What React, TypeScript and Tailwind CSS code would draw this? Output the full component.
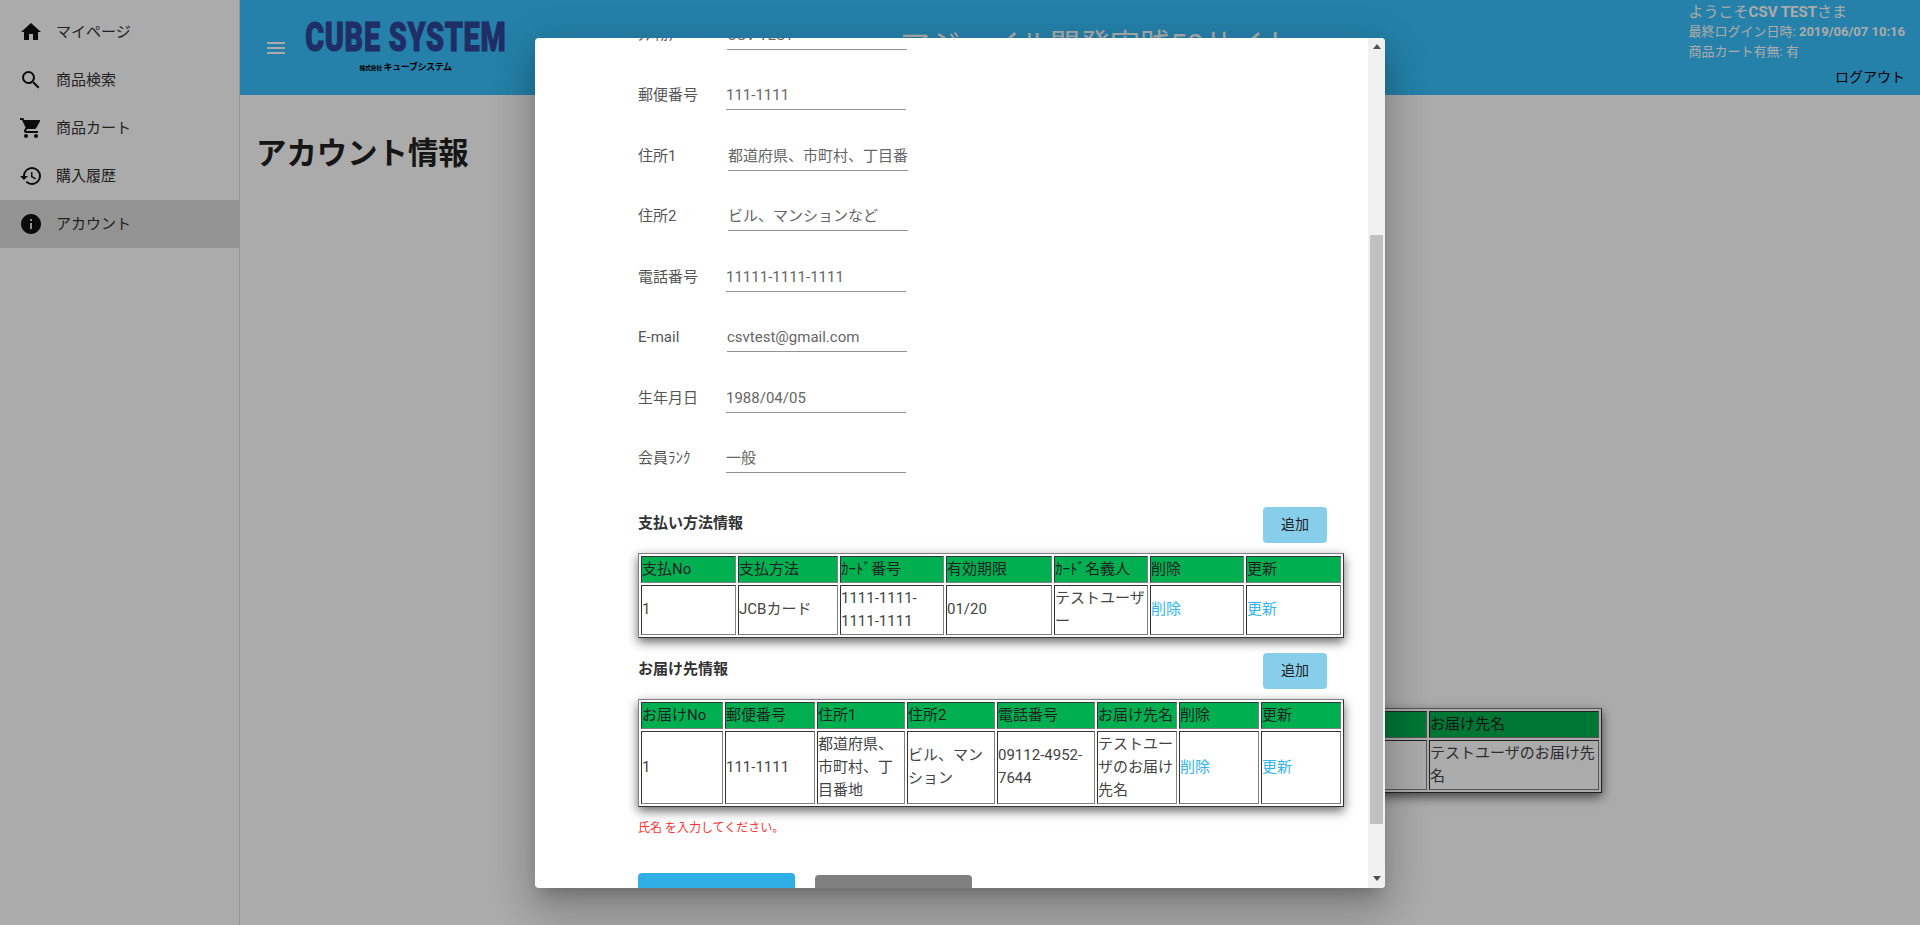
import { MdHistory, MdHome, MdInfo, MdMenu, MdSearch, MdShoppingCart } from "react-icons/md";

const FONT = "font-['Roboto','Noto_Sans_CJK_JP',sans-serif]";

const NAV_ITEMS = [
  { label: "マイページ", icon: MdHome },
  { label: "商品検索", icon: MdSearch },
  { label: "商品カート", icon: MdShoppingCart },
  { label: "購入履歴", icon: MdHistory },
  { label: "アカウント", icon: MdInfo, active: true },
];

const FIELDS = [
  { label: "ｼﾒｲｶﾅ", value: "CSV TEST", indent: "ml-[1px]" },
  { label: "郵便番号", value: "111-1111", indent: "" },
  { label: "住所1", value: "都道府県、市町村、丁目番地", indent: "ml-[2px]" },
  { label: "住所2", value: "ビル、マンションなど", indent: "ml-[2px]" },
  { label: "電話番号", value: "11111-1111-1111", indent: "" },
  { label: "E-mail", value: "csvtest@gmail.com", indent: "ml-[1px]" },
  { label: "生年月日", value: "1988/04/05", indent: "" },
  { label: "会員ﾗﾝｸ", value: "一般", indent: "" },
];

const PAYMENT_COLS = [
  { head: "支払No", cell: "1", width: "w-[95px]" },
  { head: "支払方法", cell: "JCBカード", width: "w-[100px]" },
  { head: "ｶｰﾄﾞ番号", cell: "1111-1111-1111-1111", width: "w-[104px]" },
  { head: "有効期限", cell: "01/20", width: "w-[106px]" },
  { head: "ｶｰﾄﾞ名義人", cell: "テストユーザー", width: "w-[94px]" },
  { head: "削除", cell: "削除", link: true, width: "w-[94px]" },
  { head: "更新", cell: "更新", link: true, width: "w-[95px]" },
];

const DELIVERY_COLS = [
  { head: "お届けNo", cell: "1", width: "w-[82px]" },
  { head: "郵便番号", cell: "111-1111", width: "w-[90px]" },
  { head: "住所1", cell: "都道府県、市町村、丁目番地", width: "w-[88px]" },
  { head: "住所2", cell: "ビル、マンション", width: "w-[88px]" },
  { head: "電話番号", cell: "09112-4952-7644", width: "w-[98px]" },
  { head: "お届け先名", cell: "テストユーザのお届け先名", width: "w-[80px]" },
  { head: "削除", cell: "削除", link: true, width: "w-[80px]" },
  { head: "更新", cell: "更新", link: true, width: "w-[80px]" },
];

const BEHIND_COLS = [
  { head: "電話番号", cell: "09112-4952-7644", width: "w-[162px]" },
  { head: "お届け先名", cell: "テストユーザのお届け先名", width: "w-[170px]" },
];

type Col = { head: string; cell: string; width: string; link?: boolean };

function DataTable({ cols, className }: { cols: Col[]; className: string }) {
  const cellBorder =
    "border border-t-[#333] border-l-[#333] border-r-[#808080] border-b-[#808080] py-px pl-0 pr-px text-left font-normal text-[15px] leading-[23px]";
  return (
    <table
      className={`table-fixed border-separate border-spacing-[2px] border border-t-[#808080] border-l-[#808080] border-r-[#333] border-b-[#333] shadow-[0_4px_10px_rgba(0,0,0,0.6)] ${className}`}
    >
      <thead>
        <tr>
          {cols.map((col) => (
            <th key={col.head} className={`${cellBorder} ${col.width} h-[26px] bg-[#00b050] text-[#222]`}>
              {col.head}
            </th>
          ))}
        </tr>
      </thead>
      <tbody>
        <tr>
          {cols.map((col) => (
            <td key={col.head} className={`${cellBorder} ${col.link ? "text-[#33b5ef]" : "text-[#444]"}`}>
              {col.cell}
            </td>
          ))}
        </tr>
      </tbody>
    </table>
  );
}

function Sidebar() {
  return (
    <aside className="w-[240px] shrink-0 border-r border-[#ddd] bg-white pt-[8px]">
      {NAV_ITEMS.map((item) => {
        const Icon = item.icon;
        return (
          <div
            key={item.label}
            className={`flex h-[48px] items-center pl-[19px] ${item.active ? "bg-[#dcdcdc]" : ""}`}
          >
            <Icon className="size-[24px] text-[#111]" />
            <span className="ml-[13px] text-[15px] text-[#333]">{item.label}</span>
          </div>
        );
      })}
    </aside>
  );
}

function Header() {
  return (
    <header className="flex h-[95px] shrink-0 bg-[#38c0fc]">
      <div className="ml-[24px] flex items-center">
        <MdMenu className="size-[24px] text-white" />
      </div>
      <div className="ml-[18px] flex w-[199px] flex-col items-center pt-[18px]">
        <div className="scale-x-[0.72] font-['Roboto',sans-serif] text-[40px] leading-[40px] font-black tracking-[1px] whitespace-nowrap text-[#2f4598] [-webkit-text-stroke:1px_#2f4598]">
          CUBE SYSTEM
        </div>
        <div className="mt-[2px] text-[9px] leading-[14px] font-bold tracking-[-0.4px] whitespace-nowrap text-black">
          <span className="text-[6px]">株式会社</span> キューブシステム
        </div>
      </div>
      <div className="ml-[395px] pt-[23px] text-[30px] leading-[44px] whitespace-nowrap text-white">
        マジェイル開発実践50サイト
      </div>
      <div className="ml-auto mr-[15px] flex flex-col items-stretch pt-[2px] text-white">
        <div className="text-[15px] leading-[20px]">
          ようこそ<span className="font-bold">CSV TEST</span>さま
        </div>
        <div className="text-[13px] leading-[20px]">
          最終ログイン日時: <span className="font-bold">2019/06/07 10:16</span>
        </div>
        <div className="text-[13px] leading-[19px]">商品カート有無: 有</div>
        <div className="mt-[6px] text-right text-[14px] leading-[20px] text-black">ログアウト</div>
      </div>
    </header>
  );
}

function Scrollbar() {
  return (
    <div className="flex w-[17px] shrink-0 flex-col items-center bg-[#f1f1f1]">
      <div className="mt-[6px] h-0 w-0 border-x-[4px] border-b-[5px] border-x-transparent border-b-[#505050]" />
      <div className="mt-[186px] h-[589px] w-[13px] bg-[#c1c1c1]" />
      <div className="mt-[52px] h-0 w-0 border-x-[4px] border-t-[5px] border-x-transparent border-t-[#505050]" />
    </div>
  );
}

function AccountModal() {
  return (
    <div className="absolute top-[38px] left-[535px] flex h-[850px] w-[850px] overflow-hidden rounded-[4px] bg-white shadow-[0_11px_15px_-7px_rgba(0,0,0,0.2),0_24px_38px_3px_rgba(0,0,0,0.14),0_9px_46px_8px_rgba(0,0,0,0.12)]">
      <div className="min-w-0 flex-1 overflow-hidden pl-[103px] pr-[24px]">
        <div className="mt-[-48.4px]">
          {FIELDS.map((field) => (
            <div key={field.label} className="flex h-[60.43px] items-end text-[15px]">
              <div className="h-[31px] w-[88px] leading-[32px] text-[#555]">{field.label}</div>
              <div
                className={`h-[31px] w-[180px] overflow-hidden border-b border-[#949494] leading-[32px] whitespace-nowrap text-[#666] ${field.indent}`}
              >
                {field.value}
              </div>
            </div>
          ))}
        </div>

        <div className="mt-[34px] flex h-[36px] items-start justify-between pr-[17px]">
          <div className="mt-[7px] text-[15px] leading-[18px] font-bold text-[#333]">支払い方法情報</div>
          <button className="h-[36px] w-[64px] rounded-[4px] bg-[#87ceeb] text-[14px] text-[#222]">追加</button>
        </div>
        <DataTable cols={PAYMENT_COLS} className="mt-[10px] w-[706px]" />

        <div className="mt-[15px] flex h-[36px] items-start justify-between pr-[17px]">
          <div className="mt-[7px] text-[15px] leading-[18px] font-bold text-[#333]">お届け先情報</div>
          <button className="h-[36px] w-[64px] rounded-[4px] bg-[#87ceeb] text-[14px] text-[#222]">追加</button>
        </div>
        <DataTable cols={DELIVERY_COLS} className="mt-[10px] w-[706px]" />

        <div className="mt-[12px] text-[12px] leading-[18px] text-[#ff3333]">氏名 を入力してください。</div>

        <div className="mt-[36px] flex items-start gap-[20px]">
          <button className="h-[40px] w-[157px] rounded-[4px] bg-[#2fb0e4]" />
          <button className="mt-[2px] h-[36px] w-[157px] rounded-[4px] bg-[#808080]" />
        </div>
      </div>
      <Scrollbar />
    </div>
  );
}

export default function App() {
  return (
    <div className={`relative flex h-[925px] w-[1920px] overflow-hidden bg-white ${FONT}`}>
      <Sidebar />
      <div className="flex min-w-0 flex-1 flex-col">
        <Header />
        <main className="flex flex-col px-[16px]">
          <h1 className="mt-[36px] text-[30.4px] leading-[46px] font-bold text-[#222]">アカウント情報</h1>
          <div className="mt-[531px] flex justify-end pr-[302px]">
            <DataTable cols={BEHIND_COLS} className="w-[340px]" />
          </div>
        </main>
      </div>
      <div className="absolute inset-0 bg-black/33" />
      <AccountModal />
    </div>
  );
}
